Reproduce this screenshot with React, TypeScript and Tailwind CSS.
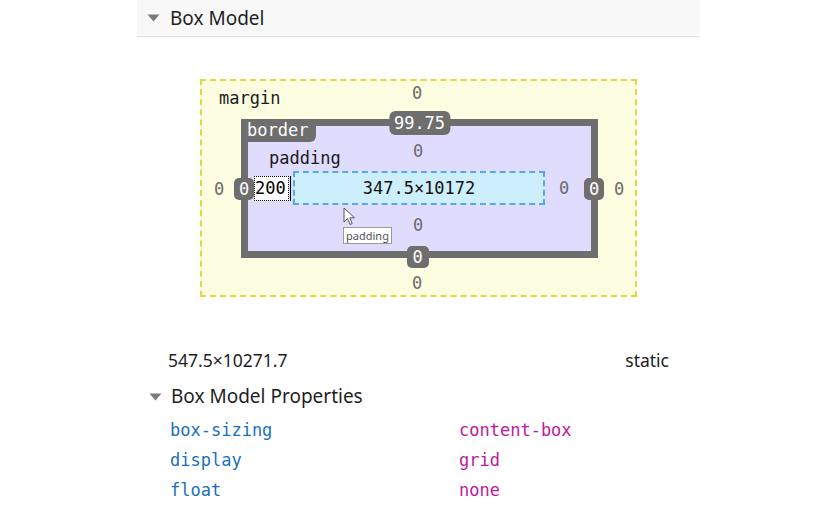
import React from "react";

const mono = { fontFamily: '"DejaVu Sans Mono", "Liberation Mono", monospace' };
const sans = { fontFamily: '"Noto Sans", "Open Sans", sans-serif' };

function Tri() {
  return (
    <svg width="13" height="8" viewBox="0 0 13 8" className="shrink-0">
      <path d="M0.5 0.5 L12.5 0.5 L6.5 7.5 Z" fill="#7a7a7a" />
    </svg>
  );
}

function Cursor() {
  return (
    <svg width="14" height="20" viewBox="0 0 14 20">
      <path d="M1 1 L1 15 L4.5 11.5 L7 17.5 L9.2 16.5 L6.8 10.8 L11.5 10.8 Z" fill="#ffffff" stroke="#555" strokeWidth="1" strokeLinejoin="round" />
    </svg>
  );
}

export default function App() {
  return (
    <div className="w-[839px] h-[513px] bg-white overflow-hidden" style={sans}>
      <div className="ml-[137px] w-[563px]">
        {/* header */}
        <div className="h-[37px] bg-[#f8f8f8] border-b border-[#e2e2e2] flex items-center pl-[10px] gap-[10px]">
          <Tri />
          <span className="text-[19px] text-[#1e1e1e] leading-none">Box Model</span>
        </div>

        {/* diagram */}
        <div className="mt-[42px] flex justify-center" style={mono}>
          <div className="w-[437px] h-[218px] border-2 border-dashed border-[#e3d93c] bg-[#fdfde1] flex flex-col text-[17px] leading-[20px]">
            <div className="h-[38px] grid grid-cols-[1fr_auto_1fr]">
              <div className="pl-[17px] pt-[7px] text-[#1a1a1a]">margin</div>
              <div className="pt-[2px] text-[#6b6b6b] pr-[3px]">0</div>
              <div />
            </div>
            <div className="h-[139px] flex">
              <div className="w-[39px] flex items-center justify-center pr-[5px] text-[#6b6b6b]">0</div>
              <div className="relative w-[357px] h-[139px] border-[7px] border-[#6e6e6e] bg-[#e0dcfe]">
                <div className="absolute -left-[7px] -top-[7px] w-[75px] h-[23px] bg-[#6e6e6e] rounded-br-[6px] text-white pl-[6px] leading-[23px]">border</div>
                <div className="absolute left-1/2 -translate-x-1/2 -top-[15px] h-[24px] px-[5px] bg-[#6e6e6e] rounded-[6px] text-white leading-[24px]">99.75</div>
                <div className="absolute -left-[14px] top-[52px] w-[20px] h-[22px] bg-[#6e6e6e] rounded-[5px] text-white leading-[22px] text-center">0</div>
                <div className="absolute -right-[13px] top-[52px] w-[20px] h-[22px] bg-[#6e6e6e] rounded-[5px] text-white leading-[22px] text-center">0</div>
                <div className="absolute left-1/2 -translate-x-1/2 -bottom-[17px] w-[22px] h-[22px] bg-[#6e6e6e] rounded-[5px] text-white leading-[22px] text-center ml-[-2px]">0</div>

                <div className="flex flex-col h-full">
                  <div className="h-[45px] grid grid-cols-[1fr_auto_1fr]">
                    <div className="pl-[21px] pt-[22px] text-[#1a1a1a]">padding</div>
                    <div className="pt-[15px] text-[#6b6b6b] pr-[3px]">0</div>
                    <div />
                  </div>
                  <div className="h-[34px] flex items-center">
                    <div className="w-[45px] flex items-center">
                      <div className="ml-[6px] w-[35px] h-[25px] border border-dotted border-black bg-white leading-[23px] text-black text-left overflow-hidden">200</div>
                      <div className="w-[1px] h-[25px] bg-black ml-[1px]" />
                    </div>
                    <div className="w-[252px] h-[34px] border-2 border-dashed border-[#59a6ee] bg-[#cdeefd] flex items-center justify-center text-[#111]">347.5×10172</div>
                    <div className="flex-1 flex justify-center pr-[8px] text-[#6b6b6b]">0</div>
                  </div>
                  <div className="flex-1 flex justify-center pt-[10px] text-[#6b6b6b] pr-[3px]">0</div>
                </div>

                <div className="absolute left-[95px] top-[81px]">
                  <Cursor />
                </div>
                <div className="absolute left-[95px] top-[101px] w-[49px] h-[17px] bg-white border border-[#9a9a9a] flex items-center justify-center text-[11px] leading-none text-[#555]" style={sans}>padding</div>
              </div>
              <div className="w-[37px] flex items-center justify-center pl-[5px] text-[#6b6b6b]">0</div>
            </div>
            <div className="flex-1 flex justify-center pt-[15px] text-[#6b6b6b] pr-[3px]">0</div>
          </div>
        </div>

        {/* size row */}
        <div className="mt-[48px] h-[30px] flex items-center justify-between pl-[31px] pr-[31px] text-[17.5px] text-[#1e1e1e]">
          <span>547.5×10271.7</span>
          <span>static</span>
        </div>

        <div className="h-[41px] flex items-center pl-[12px] gap-[9px] pt-[2px]">
          <Tri />
          <span className="text-[19px] text-[#1e1e1e] leading-none">Box Model Properties</span>
        </div>

        <div style={mono} className="text-[17px]">
          {[
            ["box-sizing", "content-box"],
            ["display", "grid"],
            ["float", "none"],
          ].map(([k, v]) => (
            <div key={k} className="h-[30px] flex items-center pl-[33px]">
              <span className="w-[289px] text-[#1a6fc0]">{k}</span>
              <span className="text-[#c0189c]">{v}</span>
            </div>
          ))}
        </div>
      </div>
    </div>
  );
}
